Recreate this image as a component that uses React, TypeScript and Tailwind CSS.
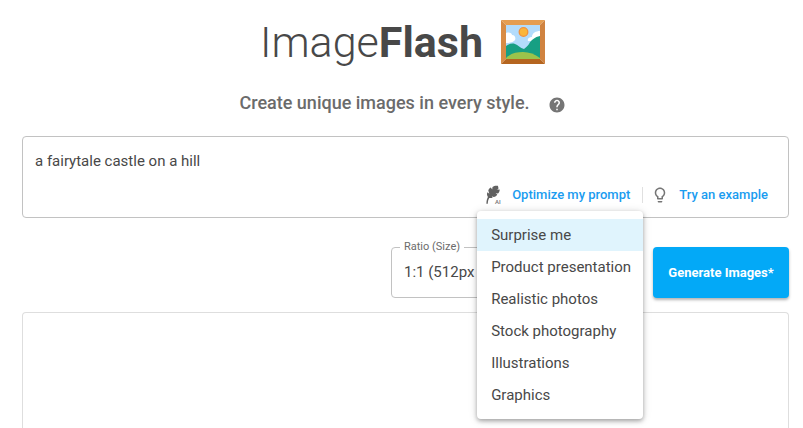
import { MdHelp, MdLightbulbOutline } from "react-icons/md";

const STYLES = [
  "Surprise me",
  "Product presentation",
  "Realistic photos",
  "Stock photography",
  "Illustrations",
  "Graphics",
];

function PictureLogo() {
  return (
    <svg viewBox="0 0 44 44" className="size-11" aria-hidden="true">
      <path d="M0 0h44l-5 5H5z" fill="#e59d50" />
      <path d="M0 0l5 5v34l-5 5z" fill="#d88c45" />
      <path d="M44 0v44l-5-5V5z" fill="#d08340" />
      <path d="M0 44l5-5h34l5 5z" fill="#b5651f" />
      <path d="M5 5h34v34H5z" fill="#b3dcfc" />
      <path d="M5 13c3-1 6 0 6 2 3 0 4 3 3 5-1 2-5 3-9 3z" fill="#fff" />
      <path d="M27 21c-1-3 2-4 4-4 0-4 4-6 8-6v10z" fill="#fff" />
      <path d="M5 26c3-2 6-3 9-2 3 1 5 4 9 5 2-2 4-3 5-5 2-4 6-7 11-8v23H5z" fill="#179f83" />
      <path d="M5 38c5-5 11-6 17-6s12 2 17 6v1H5z" fill="#9bc34b" />
      <circle cx="22.500" cy="12" r="4.300" fill="#fcb63a" stroke="#f3913a" strokeWidth="1.300" />
    </svg>
  );
}

function FeatherAiIcon() {
  return (
    <svg viewBox="0 0 18 20" className="h-5 w-[18px]" fill="currentColor" aria-hidden="true">
      <path d="M12.800.8c.5 1.200.7 2 .5 3.100l-1.700.9 3.100-.3c0 1.700-.6 3-1.700 4l-2.400-.2 1.700 1.200c-.8 1.500-2 2.300-3.600 2.600l-1.900-.8.9 1.200c-1.200.7-2.300.7-3.400.4-1 1.600-1.400 3.400-1.500 5.800H1.400c0-2.600.5-4.700 1.500-6.700-1-1.400-1.200-3-.5-4.700l1.900 1.500-1-3.200C3.700 4.200 4.500 3.200 5.800 2.600l1.400 1.800.3-2.400C9 .8 10.700.5 12.800.8z" />
      <text x="10" y="18.500" fontSize="6" fontFamily="Roboto, sans-serif" fontWeight="500" fill="#757575">AI</text>
    </svg>
  );
}

function StyleMenu() {
  return (
    <div
      role="menu"
      aria-label="Optimize my prompt"
      className="absolute top-full -left-2 z-10 mt-[6px] w-[166px] rounded bg-white py-2 shadow-[0_2px_4px_rgba(0,0,0,0.3),0_1px_10px_rgba(0,0,0,0.14)]"
    >
      {STYLES.map((style, i) => (
        <button
          key={style}
          type="button"
          role="menuitem"
          className={`flex h-8 w-full items-center px-[14px] text-[15px] font-normal whitespace-nowrap text-[#484848] ${
            i === 0 ? "bg-[#e0f4fd]" : ""
          }`}
        >
          {style}
        </button>
      ))}
    </div>
  );
}

export default function App() {
  return (
    <div className="flex min-h-screen flex-col bg-white pr-[14px] pl-[22px] font-[Roboto,sans-serif] text-[#484848]">
      <header className="flex flex-col items-center pr-[6px]">
        <h1 className="mt-4 flex items-center gap-[18px] text-[43px] leading-[52px] font-light">
          <span>
            Image<b className="font-bold">Flash</b>
          </span>
          <PictureLogo />
        </h1>
        <div className="mt-[23px] flex items-center gap-[18px] text-lg leading-6 font-medium text-[#6b6b6b]">
          <p>Create unique images in every style.</p>
          <button type="button" aria-label="Help" className="mt-1">
            <MdHelp className="size-[18px] text-[#757575]" />
          </button>
        </div>
      </header>

      <main className="flex grow flex-col">
        <section className="mt-[21px] flex flex-col rounded border border-[#c2c2c2]">
          <textarea
            aria-label="Prompt"
            defaultValue="a fairytale castle on a hill"
            className="block h-11 w-full resize-none px-3 pt-[14px] text-[15px] leading-5 outline-none"
          />
          <div className="flex h-9 items-center justify-end pr-5 pb-2 text-[13px] leading-5 font-medium text-[#1a9cf0]">
            <div className="relative">
              <button type="button" aria-haspopup="menu" className="flex items-center gap-[9px]">
                <span className="text-[#616161]">
                  <FeatherAiIcon />
                </span>
                Optimize my prompt
              </button>
              <StyleMenu />
            </div>
            <span className="mr-2 ml-3 h-4 w-px bg-[#e0e0e0]" />
            <button type="button" className="flex items-center gap-[10px]">
              <MdLightbulbOutline className="size-[18px] text-[#757575]" />
              Try an example
            </button>
          </div>
        </section>

        <div className="mt-[22px] flex items-end justify-end gap-[10px]">
          <fieldset className="h-[58px] w-[252px] rounded border border-[#c2c2c2] pl-2">
            <legend className="px-1 text-[11px] leading-[14px] text-[#6b6b6b]">
              <label htmlFor="ratio">Ratio (Size)</label>
            </legend>
            <select id="ratio" className="block h-9 w-full appearance-none bg-transparent pl-1 text-[15px] outline-none">
              <option>1:1 (512px x 512px)</option>
              <option>16:9 (896px x 512px)</option>
            </select>
          </fieldset>
          <button
            type="button"
            className="h-[51px] w-[136px] rounded bg-[#03a9f7] text-[13px] font-bold text-white shadow-[0_2px_3px_rgba(0,0,0,0.3)]"
          >
            Generate Images*
          </button>
        </div>

        <section aria-label="Generated images" className="mt-[14px] grow rounded-t border border-b-0 border-[#dedede]" />
      </main>
    </div>
  );
}
